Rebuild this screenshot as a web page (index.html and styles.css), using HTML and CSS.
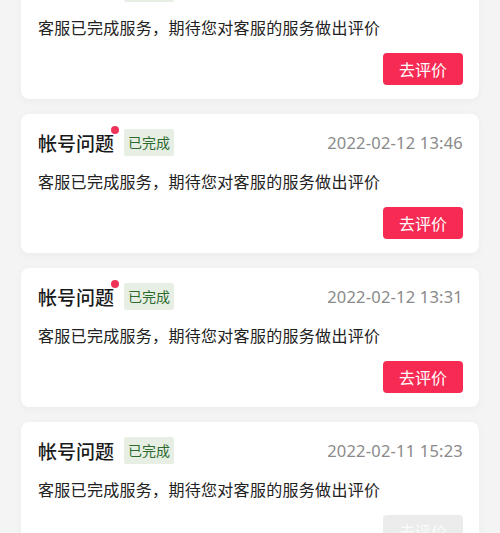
FILE: index.html
```html
<!DOCTYPE html>
<html lang="zh">
<head>
<meta charset="utf-8">
<link rel="stylesheet" href="styles.css">
</head>
<body>
<div class="list">
  <div class="card">
    <div class="head">
      <div class="title dot">帐号问题</div>
      <div class="badge">已完成</div>
      <div class="date">2022-02-12 14:02</div>
    </div>
    <div class="body">客服已完成服务，期待您对客服的服务做出评价</div>
    <div class="foot"><button class="btn">去评价</button></div>
  </div>
  <div class="card">
    <div class="head">
      <div class="title dot">帐号问题</div>
      <div class="badge">已完成</div>
      <div class="date">2022-02-12 13:46</div>
    </div>
    <div class="body">客服已完成服务，期待您对客服的服务做出评价</div>
    <div class="foot"><button class="btn">去评价</button></div>
  </div>
  <div class="card">
    <div class="head">
      <div class="title dot">帐号问题</div>
      <div class="badge">已完成</div>
      <div class="date">2022-02-12 13:31</div>
    </div>
    <div class="body">客服已完成服务，期待您对客服的服务做出评价</div>
    <div class="foot"><button class="btn">去评价</button></div>
  </div>
  <div class="card">
    <div class="head">
      <div class="title">帐号问题</div>
      <div class="badge">已完成</div>
      <div class="date">2022-02-11 15:23</div>
    </div>
    <div class="body">客服已完成服务，期待您对客服的服务做出评价</div>
    <div class="foot"><button class="btn btn-off">去评价</button></div>
  </div>
</div>
</body>
</html>
```
FILE: styles.css
```css
html, body {
  margin: 0;
  padding: 0;
  background: #f4f4f5;
  overflow: hidden;
}
body {
  font-family: "Noto Sans CJK SC", "Noto Sans", sans-serif;
  color: #222;
}
.list {
  display: flex;
  flex-direction: column;
  gap: 15px;
  padding: 0 21px;
  margin-top: -40px;
}
.card {
  background: #fff;
  border-radius: 8px;
  height: 139px;
  box-sizing: border-box;
  padding: 15px 16px 0 17px;
  box-shadow: 0 2px 8px rgba(0, 0, 0, 0.04);
}
.head {
  display: flex;
  align-items: center;
  height: 27px;
}
.title {
  position: relative;
  font-size: 19px;
  font-weight: 500;
  color: #1a1a1a;
  line-height: 27px;
}
.title.dot::after {
  content: "";
  position: absolute;
  right: -5px;
  top: -3px;
  width: 8px;
  height: 8px;
  border-radius: 50%;
  background: #ee3459;
}
.badge {
  margin-left: 10px;
  background: #e7efe5;
  color: #2d6a2e;
  font-size: 14px;
  line-height: 27px;
  height: 27px;
  padding: 0 4px;
  border-radius: 2px;
}
.date {
  margin-left: auto;
  font-family: "Noto Sans", sans-serif;
  font-size: 16.5px;
  color: #8a8a8a;
  letter-spacing: 0.2px;
}
.body {
  margin-top: 12px;
  font-size: 16px;
  line-height: 26px;
  letter-spacing: 0.3px;
  color: #222;
}
.foot {
  display: flex;
  justify-content: flex-end;
  margin-top: 13px;
}
.btn {
  width: 80px;
  height: 32px;
  border: none;
  border-radius: 4px;
  background: #f62a52;
  color: #fff;
  font-family: "Noto Sans CJK SC", sans-serif;
  font-size: 16px;
  padding: 0;
}
.btn-off {
  background: #ececec;
  color: #fafafa;
}
```
